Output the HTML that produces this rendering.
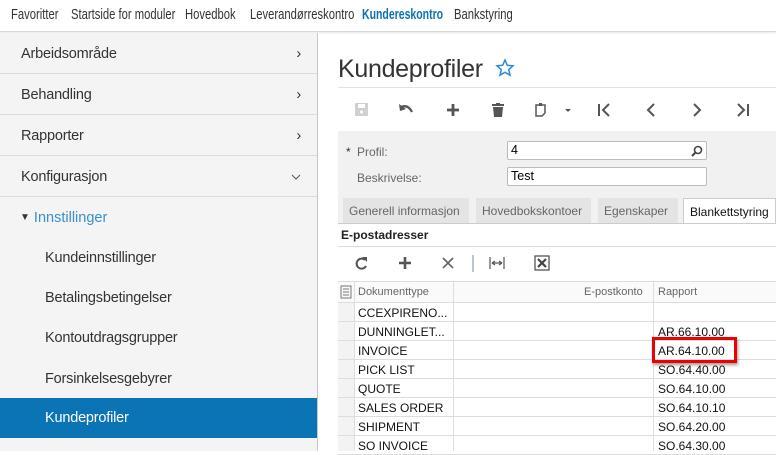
<!DOCTYPE html>
<html><head><meta charset="utf-8"><style>
*{box-sizing:border-box;margin:0;padding:0}
body{width:776px;height:451px;overflow:hidden;background:#fff;font-family:"Liberation Sans",sans-serif;position:relative}
.top{position:absolute;left:0;top:0;width:776px;height:32px;background:#fff;border-bottom:1px solid #d8d8d8;box-shadow:0 1px 2px rgba(0,0,0,.1)}
.top span{position:absolute;top:6px;font-size:15px;color:#333;transform:scaleX(.75);transform-origin:left top;white-space:nowrap}
.side{position:absolute;left:0;top:33px;width:318px;height:418px;background:#f4f4f4;border-right:1px solid #c8c8c8}
.it{position:absolute;left:0;width:317px;height:41px;border-bottom:1px solid #dcdcdc;font-size:14.5px;color:#333;padding:13px 0 0 21px;letter-spacing:-.2px}
.it .ch{position:absolute;right:16px;top:13px}
.sub{position:absolute;left:45px;font-size:14.5px;color:#333;letter-spacing:-.2px}
.abs{position:absolute}
.lbl{position:absolute;font-size:12px;color:#666}
.inp{position:absolute;background:#fff;border:1px solid #bbb;border-radius:2px;height:19px;font-size:12.5px;padding:1px 3px;color:#000}
.tab{position:absolute;top:198px;height:25px;background:#e4e4e4;font-size:12px;color:#666;padding:6px 6px 0}
.row{position:absolute;left:338px;width:438px;height:19px;border-bottom:1px solid #ddd;font-size:12px;color:#111}
.row span{position:absolute;top:3px}
</style></head><body>
<div class="top">
<span style="left:11px">Favoritter</span>
<span style="left:71px">Startside for moduler</span>
<span style="left:185px">Hovedbok</span>
<span style="left:250px">Leverandørreskontro</span>
<span style="left:362px;color:#0b73b3;font-weight:bold;transform:scaleX(.7)">Kundereskontro</span>
<span style="left:454px">Bankstyring</span>
</div>
<div class="side">
<div class="it" style="top:0">Arbeidsområde<span class="ch">&#x203A;</span></div>
<div class="it" style="top:41px">Behandling<span class="ch">&#x203A;</span></div>
<div class="it" style="top:82px">Rapporter<span class="ch">&#x203A;</span></div>
<div class="it" style="top:123px">Konfigurasjon<svg class="ch" style="top:18px" width="10" height="6"><path d="M1 1L5 5L9 1" stroke="#555" fill="none"/></svg></div>
<div class="abs" style="left:20px;top:177px;font-size:14.5px;color:#3a8fd0"><span style="color:#333;font-size:10px;position:relative;top:-2px">&#9660;</span> Innstillinger</div>
<div class="sub" style="top:217px">Kundeinnstillinger</div>
<div class="sub" style="top:257px">Betalingsbetingelser</div>
<div class="sub" style="top:297px">Kontoutdragsgrupper</div>
<div class="sub" style="top:338px">Forsinkelsesgebyrer</div>
<div class="abs" style="left:0;top:365px;width:317px;height:40px;background:#0b74b5"></div>
<div class="sub" style="top:377px;color:#fff">Kundeprofiler</div>
</div>
<div class="abs" style="left:338px;top:55px;font-size:25px;color:#333;font-weight:300;letter-spacing:-.3px">Kundeprofiler</div>
<svg class="abs" style="left:495px;top:58px" width="20" height="20" viewBox="0 0 20 20"><path d="M10 2L12.3 7.3 18 7.8 13.7 11.6 15 17.2 10 14.2 5 17.2 6.3 11.6 2 7.8 7.7 7.3Z" fill="none" stroke="#2a8ad4" stroke-width="1.5"/></svg>
<div class="abs" style="left:338px;top:87px;width:438px;height:1px;background:#e2e2e2"></div>
<svg class="abs" style="left:338px;top:96px" width="438" height="30">
<g fill="#cfcfcf"><rect x="17" y="7" width="13" height="13" rx="1"/></g><rect x="20" y="8" width="7" height="4" fill="#fff"/><circle cx="23.5" cy="16" r="1.5" fill="#fff"/>
<path d="M63 11Q70 8 74 16" stroke="#555" stroke-width="2.2" fill="none"/><path d="M61 8L62 15L68 13Z" fill="#555"/>
<path d="M115 8V20M109 14H121" stroke="#555" stroke-width="2.8"/>
<path d="M154 9H166" stroke="#555" stroke-width="2"/><rect x="158" y="7" width="4" height="2" fill="#555"/><path d="M155 11H165L164 21H156Z" fill="#555"/>
<path d="M198 9H207V17L204 20H198Z" fill="none" stroke="#555" stroke-width="1.5"/><rect x="201" y="7" width="3" height="3" fill="#555"/>
<path d="M227 13H233L230 16Z" fill="#555"/>
<path d="M261 8V20M271 8L265 14L271 20" stroke="#555" stroke-width="2" fill="none"/>
<path d="M316 8L310 14L316 20" stroke="#555" stroke-width="2" fill="none"/>
<path d="M356 8L362 14L356 20" stroke="#555" stroke-width="2" fill="none"/>
<path d="M400 8L406 14L400 20M410 8V20" stroke="#555" stroke-width="2" fill="none"/>
</svg>
<div class="abs" style="left:338px;top:131px;width:438px;height:93px;background:#f1f1f1"></div>
<div class="lbl" style="left:346px;top:145px;color:#333">*</div>
<div class="lbl" style="left:357px;top:145px">Profil:</div>
<div class="lbl" style="left:357px;top:171px">Beskrivelse:</div>
<div class="inp" style="left:507px;top:141px;width:200px">4<svg style="position:absolute;right:3px;top:3px" width="12" height="12"><circle cx="7" cy="5" r="3.5" stroke="#444" stroke-width="1.6" fill="none"/><path d="M4.5 7.5L1 11" stroke="#444" stroke-width="2"/></svg></div>
<div class="inp" style="left:507px;top:167px;width:200px">Test</div>
<div class="tab" style="left:343px;width:126px">Generell informasjon</div>
<div class="tab" style="left:476px;width:115px">Hovedbokskontoer</div>
<div class="tab" style="left:598px;width:80px">Egenskaper</div>
<div class="tab" style="left:683px;width:93px;background:#fff;border:1px solid #ccc;border-bottom:none;color:#111;height:26px">Blankettstyring</div>
<div class="abs" style="left:338px;top:223px;width:438px;height:1px;background:#ccc"></div>
<div class="abs" style="left:341px;top:228px;font-size:12px;font-weight:bold;color:#222">E-postadresser</div>
<div class="abs" style="left:338px;top:246px;width:438px;height:1px;background:#ddd"></div>
<svg class="abs" style="left:338px;top:252px" width="438" height="24">
<path d="M27 8A5 5 0 1 0 28 14" stroke="#555" stroke-width="2" fill="none"/><path d="M24 5L29 5L29 10Z" fill="#555"/>
<path d="M67 5V17M61 11H73" stroke="#555" stroke-width="2.6"/>
<path d="M105 6L115 16M115 6L105 16" stroke="#666" stroke-width="1.6"/>
<path d="M135 3V20" stroke="#6d8fb0" stroke-width="1"/>
<path d="M152 5V17M166 5V17M154 11H164M154 11L157 9M154 11L157 13M164 11L161 9M164 11L161 13" stroke="#555" stroke-width="1.2" fill="none"/>
<rect x="197" y="4" width="14" height="14" fill="none" stroke="#555" stroke-width="1.3"/><path d="M200 7L208 15M208 7L200 15" stroke="#444" stroke-width="2.2"/>
</svg>
<div class="abs" style="left:338px;top:281px;width:438px;height:22px;background:#fafafa;border-top:1px solid #ddd;border-bottom:1px solid #ddd"></div>
<div class="abs" style="left:338px;top:303px;width:16px;height:148px;background:#f3f3f3"></div>
<svg class="abs" style="left:340px;top:285px" width="12" height="14"><rect x="1" y="1" width="10" height="12" fill="none" stroke="#777"/><path d="M3 4H9M3 7H9M3 10H9" stroke="#777"/></svg>
<div class="abs" style="left:358px;top:286px;font-size:11px;color:#666">Dokumenttype</div>
<div class="abs" style="left:584px;top:286px;font-size:11px;color:#666">E-postkonto</div>
<div class="abs" style="left:658px;top:286px;font-size:11px;color:#666">Rapport</div>
<div class="row" style="top:303px"><span style="left:20px">CCEXPIRENO...</span></div>
<div class="row" style="top:322px"><span style="left:20px">DUNNINGLET...</span><span style="left:320px">AR.66.10.00</span></div>
<div class="row" style="top:341px"><span style="left:20px">INVOICE</span><span style="left:320px">AR.64.10.00</span></div>
<div class="row" style="top:360px"><span style="left:20px">PICK LIST</span><span style="left:320px">SO.64.40.00</span></div>
<div class="row" style="top:379px"><span style="left:20px">QUOTE</span><span style="left:320px">SO.64.10.00</span></div>
<div class="row" style="top:398px"><span style="left:20px">SALES ORDER</span><span style="left:320px">SO.64.10.10</span></div>
<div class="row" style="top:417px"><span style="left:20px">SHIPMENT</span><span style="left:320px">SO.64.20.00</span></div>
<div class="row" style="top:436px"><span style="left:20px">SO INVOICE</span><span style="left:320px">SO.64.30.00</span></div>
<div class="abs" style="left:354px;top:281px;width:1px;height:170px;background:#ddd"></div>
<div class="abs" style="left:453px;top:281px;width:1px;height:170px;background:#ddd"></div>
<div class="abs" style="left:653px;top:281px;width:1px;height:170px;background:#ddd"></div>
<div class="abs" style="left:652px;top:337px;width:85px;height:26px;border:3px solid #e00;box-shadow:1px 2px 3px rgba(0,0,0,.4)"></div>
</body></html>
